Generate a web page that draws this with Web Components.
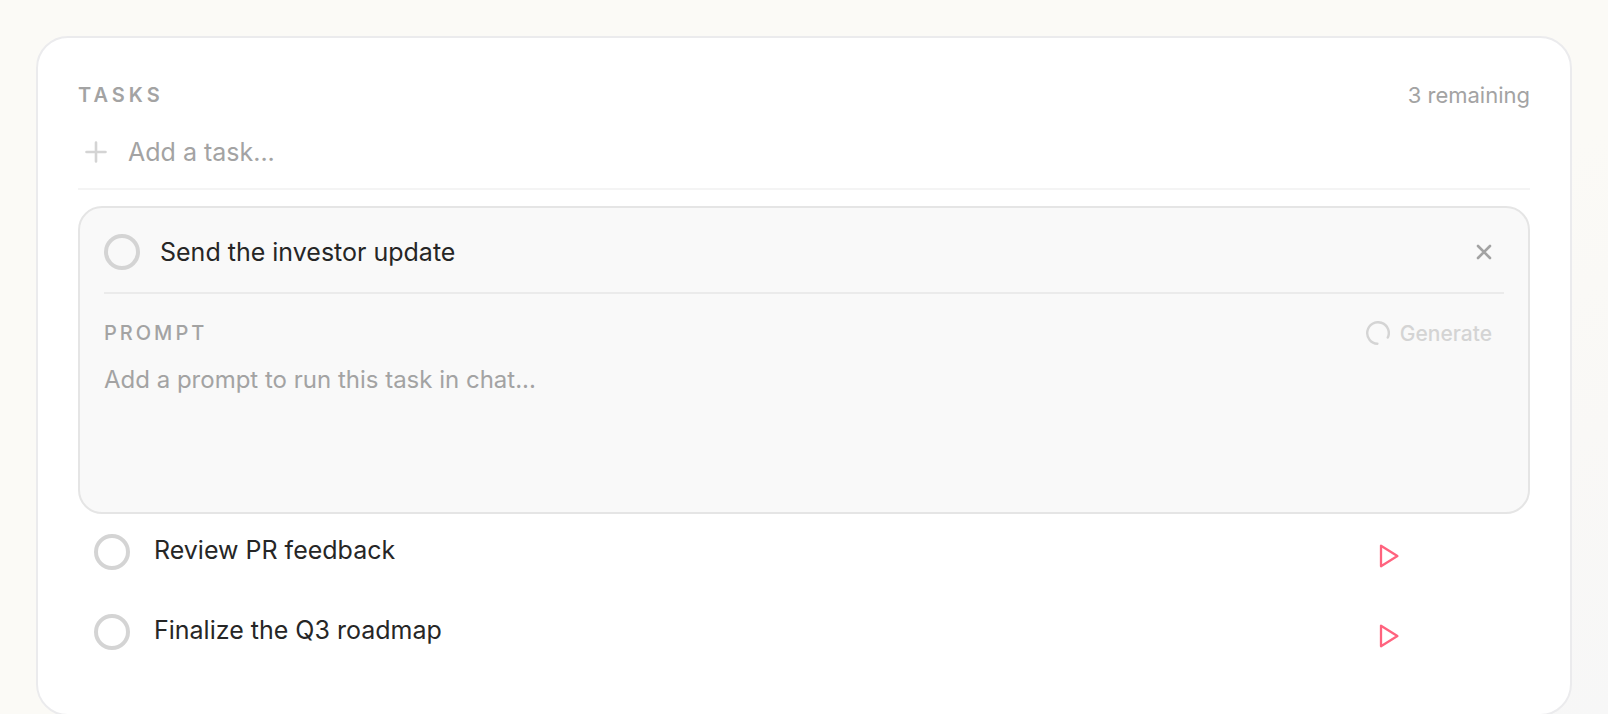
<!DOCTYPE html>
<html lang="en">
<head>
<meta charset="UTF-8">
<meta name="viewport" content="width=device-width, initial-scale=1">
<title>Tasks</title>
<style>
    html{
        min-height: 100%;
        background: linear-gradient(155deg, #fbfaf6 0%, #fbfaf6 60%, #f9f8f6 80%, #f7f7f7 100%);
    }
    body{
        margin: 0;
        padding: 36px 36px 0;
        font-family: Inter, "Liberation Sans", sans-serif;
        font-size: 25px;
        color: #262626;
    }
</style>
</head>
<body>
<task-panel>
    <task-add></task-add>
    <task-editor>Send the investor update</task-editor>
    <task-item>Review PR feedback</task-item>
    <task-item>Finalize the Q3 roadmap</task-item>
</task-panel>

<script>
const checkStyle = `
    input[type="checkbox"]{
        appearance: none;
        flex: none;
        width: 36px;
        height: 36px;
        margin: 0;
        border: 4px solid #d4d4d4;
        border-radius: 50%;
        cursor: pointer;
    }
    input[type="checkbox"]:checked{
        background-color: #d4d4d4;
    }
`;

class TaskPanel extends HTMLElement {
    constructor(){
        super();
        this.shadowDOM = this.attachShadow({mode:"open"});
    }

    connectedCallback() {
        this.render();
    }

    render(){
        this.shadowDOM.innerHTML = `
        <style>
            :host{
                display: block;
                box-sizing: border-box;
                padding: 40px;
                border: 2px solid #ebebed;
                border-radius: 32px;
                background-color: white;
            }
            header{
                display: flex;
                align-items: center;
                justify-content: space-between;
                height: 34px;
                color: #a3a3a3;
            }
            h2{
                margin: 0;
                font-size: 20px;
                font-weight: 600;
                letter-spacing: 4px;
            }
            span{
                font-size: 22px;
            }
        </style>
        <header>
            <h2>TASKS</h2>
            <span>3 remaining</span>
        </header>
        <slot></slot>`;
    }
}

class TaskAdd extends HTMLElement {
    constructor(){
        super();
        this.shadowDOM = this.attachShadow({mode:"open"});
    }

    connectedCallback() {
        this.render();
    }

    render(){
        this.shadowDOM.innerHTML = `
        <style>
            :host{
                display: block;
                margin-bottom: 16px;
                border-bottom: 2px solid #f4f4f4;
            }
            label{
                display: flex;
                align-items: center;
                gap: 14px;
                height: 72px;
                padding-top: 4px;
            }
            svg{
                flex: none;
                width: 36px;
                height: 36px;
            }
            input{
                flex: 1;
                min-width: 0;
                height: 36px;
                padding: 0;
                border: 0;
                outline: 0;
                background: none;
                font: inherit;
                color: inherit;
            }
            input::placeholder{
                color: #a3a3a3;
            }
        </style>
        <label>
            <svg viewBox="0 0 36 36" fill="none" stroke="#d4d4d4" stroke-width="2.6" stroke-linecap="round" aria-hidden="true">
                <path d="M18 8.5v19M8.5 18h19"/>
            </svg>
            <input type="text" placeholder="Add a task..." aria-label="Add a task">
        </label>`;
    }
}

class TaskEditor extends HTMLElement {
    constructor(){
        super();
        this.shadowDOM = this.attachShadow({mode:"open"});
    }

    connectedCallback() {
        this.render();
    }

    render(){
        this.shadowDOM.innerHTML = `
        <style>
            ${checkStyle}
            :host{
                display: block;
                box-sizing: border-box;
                padding: 0 24px 20px;
                border: 2px solid #e5e5e5;
                border-radius: 24px;
                background-color: #f9f9f9;
            }
            .title{
                display: flex;
                align-items: center;
                gap: 20px;
                height: 80px;
                padding-top: 4px;
                border-bottom: 2px solid #ebebeb;
            }
            .title label{
                flex: 1;
            }
            button{
                display: flex;
                align-items: center;
                padding: 0;
                border: 0;
                background: none;
                font: inherit;
                cursor: pointer;
            }
            .close{
                justify-content: center;
                width: 40px;
                height: 40px;
            }
            .prompt{
                display: flex;
                align-items: center;
                justify-content: space-between;
                height: 62px;
                padding: 8px 12px 0 0;
            }
            .prompt label{
                font-size: 20px;
                font-weight: 500;
                letter-spacing: 3px;
                color: #a3a3a3;
            }
            .generate{
                gap: 10px;
                font-size: 21px;
                font-weight: 500;
                color: #d4d4d4;
            }
            textarea{
                display: block;
                box-sizing: border-box;
                width: 100%;
                height: 128px;
                padding: 0;
                border: 0;
                outline: 0;
                resize: none;
                background: none;
                font: inherit;
                font-size: 24px;
                line-height: 32px;
                color: inherit;
            }
            textarea::placeholder{
                color: #a3a3a3;
            }
        </style>
        <div class="title">
            <input type="checkbox" id="done">
            <label for="done"><slot></slot></label>
            <button class="close" type="button" aria-label="Close">
                <svg width="16" height="16" viewBox="0 0 16 16" fill="none" stroke="#a3a3a3" stroke-width="2.6" stroke-linecap="round">
                    <path d="M2 2l12 12M14 2L2 14"/>
                </svg>
            </button>
        </div>
        <div class="prompt">
            <label for="promptInput">PROMPT</label>
            <button class="generate" type="button" disabled>
                <svg width="24" height="24" viewBox="0 0 24 24" fill="none" stroke="#d4d4d4" stroke-width="2.4" stroke-linecap="round" aria-hidden="true">
                    <path d="M21.8 16.6A10.8 10.8 0 1 0 11.4 22.8"/>
                </svg>
                Generate
            </button>
        </div>
        <textarea id="promptInput" placeholder="Add a prompt to run this task in chat..."></textarea>`;
    }
}

class TaskItem extends HTMLElement {
    constructor(){
        super();
        this.shadowDOM = this.attachShadow({mode:"open"});
    }

    connectedCallback() {
        this.render();
    }

    render(){
        this.shadowDOM.innerHTML = `
        <style>
            ${checkStyle}
            :host{
                display: flex;
                align-items: flex-start;
                box-sizing: border-box;
                height: 80px;
                padding: 20px 16px 0;
            }
            label{
                flex: 1;
                padding-left: 24px;
                line-height: 32px;
            }
            /* play, edit, delete: the last two only take their room */
            .actions{
                display: grid;
                grid-template-columns: repeat(3, 50px);
            }
            button{
                display: flex;
                align-items: center;
                justify-content: center;
                height: 44px;
                padding: 0;
                border: 0;
                background: none;
                cursor: pointer;
            }
        </style>
        <input type="checkbox" id="done">
        <label for="done"><slot></slot></label>
        <div class="actions">
            <button type="button" aria-label="Run task">
                <svg width="24" height="24" viewBox="0 0 24 24" fill="none" stroke="#ff637e" stroke-width="2.3" stroke-linejoin="round">
                    <path d="M4 1.7v20.6L20.4 12z"/>
                </svg>
            </button>
        </div>`;
    }
}

customElements.define("task-panel", TaskPanel);
customElements.define("task-add", TaskAdd);
customElements.define("task-editor", TaskEditor);
customElements.define("task-item", TaskItem);
</script>
</body>
</html>
